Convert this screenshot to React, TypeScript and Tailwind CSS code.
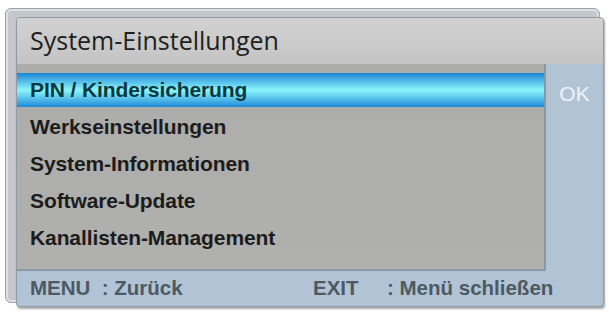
import React from 'react';

const items = [
  'PIN / Kindersicherung',
  'Werkseinstellungen',
  'System-Informationen',
  'Software-Update',
  'Kanallisten-Management',
];

export default function App() {
  return (
    <div className="relative h-[314px] w-[609px] overflow-hidden bg-white pl-[16px] pt-[17px] font-['Liberation_Sans',Arial,sans-serif]">
      {/* back plate */}
      <div className="absolute left-[5px] top-[8px] h-[295px] w-[595px] rounded-[6px] border border-[#9aa2aa] bg-[#c4c8cc] shadow-[inset_0_0_0_2px_#dfe2e4]" />

      <div className="relative flex h-[290px] w-[588px] flex-col overflow-hidden rounded-[4px] border border-[#8e9aa6] bg-[#b3c3d6] shadow-[1px_2px_2px_rgba(0,0,0,0.35)]">
        <div className="flex h-[46px] items-center bg-gradient-to-b from-[#d2d2d2] to-[#c4c4c4] pl-[13px] font-['Open_Sans',sans-serif] text-[25px] text-[#202020]">
          System-Einstellungen
        </div>

        <div className="flex h-[207px]">
          <div className="flex w-[529px] flex-col border-b-2 border-r-2 border-[#8a98a8] bg-gradient-to-b from-[#acacaa] to-[#b0b0ae] pt-[9px]">
            {items.map((label, i) => (
              <div
                key={label}
                className={
                  i === 0
                    ? 'flex h-[34px] items-center bg-gradient-to-b from-[#1684d4] via-[#8cf6fa] to-[#1c8ad8] pl-[13px] text-[21px] font-bold tracking-[-0.1px] text-[#0b3840]'
                    : 'mt-[3px] flex h-[34px] items-center pl-[13px] text-[21px] font-bold tracking-[-0.1px] text-[#1c1c1c]'
                }
              >
                {label}
              </div>
            ))}
          </div>
          <div className="flex flex-1 justify-center pt-[14px] text-[21px] text-[#eef3f8]">OK</div>
        </div>

        <div className="flex flex-1 items-center pl-[13px] text-[20.5px] font-bold text-[#4c5a62]">
          <span className="w-[283px]">MENU&nbsp; : Zurück</span>
          <span className="w-[74px]">EXIT</span>
          <span>: Menü schließen</span>
        </div>
      </div>
    </div>
  );
}
